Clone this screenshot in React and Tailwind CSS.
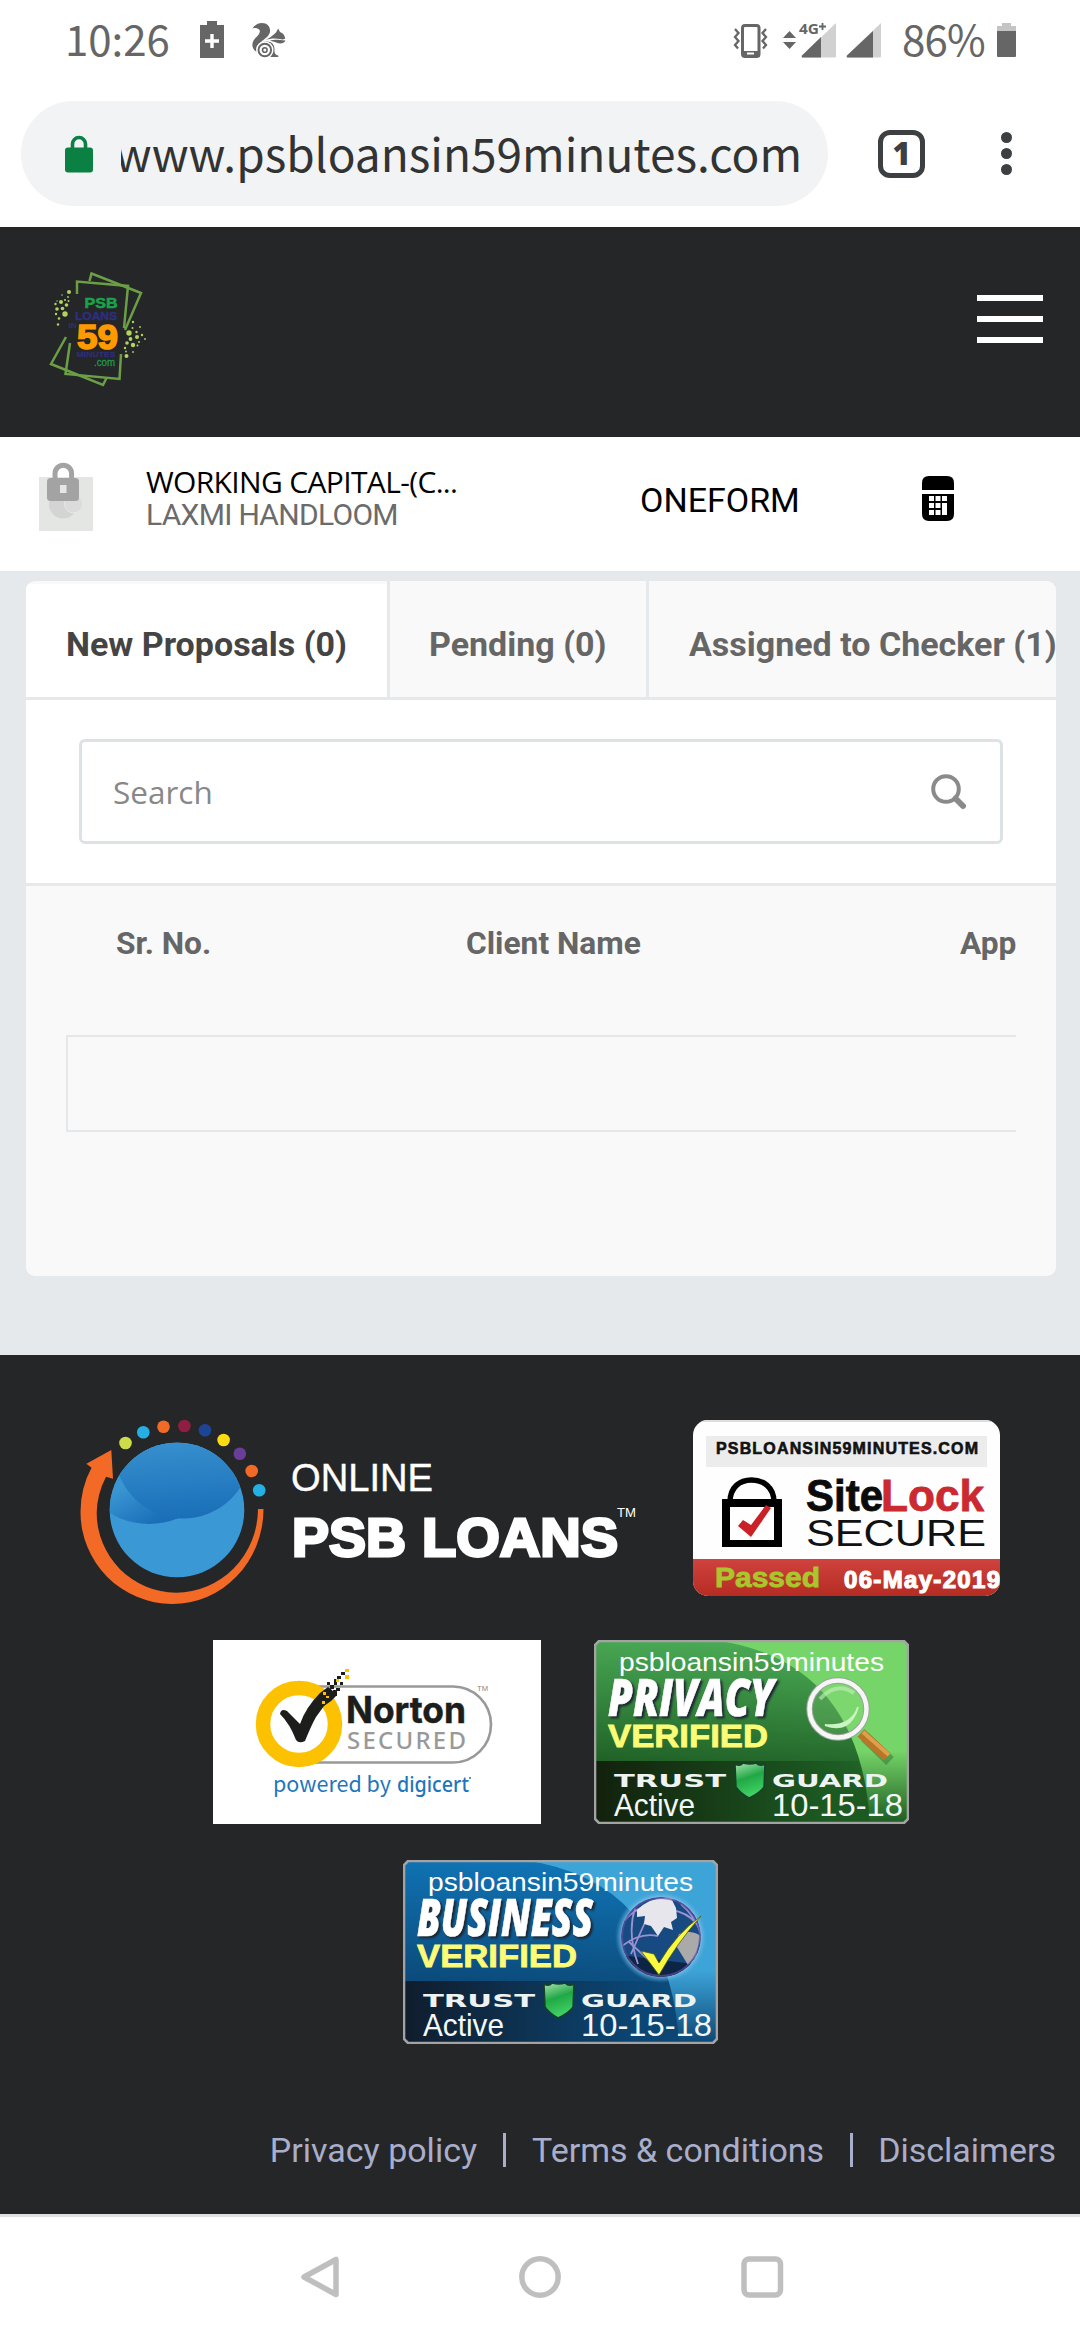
import React from "react";

const INK = "#666666";

function ChargingBattery() {
  return (
    <svg className="ml-[29px] mt-[-1px] h-[37px] w-[24px]" viewBox="0 0 24 37" fill={INK}>
      <path d="M7 0h10v4h7v33H0V4h7z" />
      <path d="M12 13v14M5 20h14" stroke="#fff" strokeWidth="3.400" />
    </svg>
  );
}

function Squirrel() {
  return (
    <svg className="ml-[28px] h-[35px] w-[34px]" viewBox="0 0 34 35">
      <path d="M0.500 5.500C3 1.500 6.500 0 10 0c5.500 0 8.500 4 8 8.500-.5 4-4 6.500-8 9.500-4 3-6 6-5 11C-1 26-1 19 4 14.500 8 11 9 7.500 6.500 6 4.500 4.800 2.500 5 0.500 5.500z" fill={INK} />
      <path d="M12 17.500c5-1.500 8-4.500 12-8l2.200-4 1.800 3.500c3 1 4.500 3 5.300 6.500-2 1.200-3.500 1-5.500.6C23 15 18 15.500 12 17.500z" fill={INK} />
      <path d="M18 17.500c5-1.500 9-.5 15.500 0-1 3-5.500 3.500-8 2.500-2-1-5-1.500-7.500-2.500z" fill={INK} />
      <path d="M10 19c8-2 13 1 12.500 8-.2 2.500.5 5 3.800 5.500V34H12z" fill={INK} />
      <circle cx="12.800" cy="27" r="8" fill={INK} stroke="#fff" strokeWidth="1.500" />
      <circle cx="12.800" cy="27" r="4.200" fill={INK} stroke="#fff" strokeWidth="2.200" />
      <circle cx="12.800" cy="27" r="1.500" fill="#fff" />
    </svg>
  );
}

function StatusIcons() {
  return (
    <svg className="h-[38px] w-[150px]" viewBox="731 21 150 38">
      <rect x="741.500" y="25.500" width="16.500" height="31" rx="2.500" fill="none" stroke={INK} strokeWidth="3" />
      <rect x="741" y="51" width="18" height="6" fill={INK} />
      <rect x="746" y="52.500" width="7" height="2" fill="#fff" />
      <path d="M734 29l3.500 4-3.500 4 3.500 4-3.500 4 3 3.500M765 29l-3.500 4 3.500 4-3.500 4 3.500 4-3 3.500" fill="none" stroke={INK} strokeWidth="2.300" />
      <path d="M782 38l6.500-7 6.500 7zM782 42l6.500 7 6.500-7z" fill={INK} />
      <path d="M835 23v33.500q0 1-1 1h-32q-2 0-1-2z" fill="#d1d1d1" />
      <path d="M820 37v20.500h-18q-2 0-1-2z" fill={INK} />
      <text x="798" y="34" fontSize="15" fontWeight="700" fontFamily="Noto Sans, sans-serif" fill={INK} stroke="#fff" strokeWidth="2.500" paintOrder="stroke" textLength="20" lengthAdjust="spacingAndGlyphs">4G</text>
      <path d="M821.500 23v7M818 26.500h7" stroke={INK} strokeWidth="1.800" />
      <path d="M880 23v33.500q0 1-1 1h-32q-2 0-1-2z" fill="#d1d1d1" />
      <path d="M872 31v26.500h-25q-2 0-1-2z" fill={INK} />
    </svg>
  );
}

function BrowserChrome() {
  return (
    <div className="h-[227px] bg-white">
      <div className="flex h-[80px] items-center pl-[65px] pr-[64px] text-[#666666]">
        <span className="-mt-[4px] w-[106px] whitespace-nowrap font-['Noto_Sans_CJK_SC',sans-serif] text-[42px] leading-[74px]">10:26</span>
        <ChargingBattery />
        <Squirrel />
        <div className="ml-auto flex items-center">
          <StatusIcons />
          <span className="-mt-[4px] ml-[20px] w-[84px] whitespace-nowrap font-['Noto_Sans_CJK_SC',sans-serif] text-[42px] leading-[74px] tracking-[-0.8px]">86%</span>
          <svg className="ml-[11px] h-[34px] w-[19px]" viewBox="0 0 19 34">
            <path d="M5 0h9v3h5v8H0V3h5z" fill="#c4c4c4" />
            <path d="M0 8h19v25q0 1-1 1H1q-1 0-1-1z" fill={INK} />
          </svg>
        </div>
      </div>
      <div className="flex items-center pt-[21px] pl-[21px]">
        <div className="flex h-[105px] w-[807px] items-center rounded-full bg-[#f1f3f4] pl-[44px]">
          <svg className="h-[38px] w-[28px]" viewBox="0 0 28 38">
            <path d="M7.500 14V9a6.500 6.500 0 0 1 13 0v5" fill="none" stroke="#0b8043" strokeWidth="3.600" />
            <rect y="12.500" width="28" height="25" rx="3" fill="#0b8043" />
          </svg>
          <div className="-mt-[3px] ml-[28px] flex w-[681px] justify-end overflow-hidden">
            <span className="whitespace-nowrap font-['Noto_Sans_CJK_SC',sans-serif] text-[46px] leading-[74px] text-[#333333]">www.psbloansin59minutes.com</span>
          </div>
        </div>
        <div className="ml-[50px] flex h-[48px] w-[47px] items-center justify-center rounded-[12px] border-[5px] border-[#3c4043] font-['Noto_Sans',sans-serif] text-[31px] font-black leading-none text-[#3c4043]">1</div>
        <div className="ml-[76px] flex flex-col gap-[5px]">
          <i className="size-[11px] rounded-full bg-[#3c4043]" />
          <i className="size-[11px] rounded-full bg-[#3c4043]" />
          <i className="size-[11px] rounded-full bg-[#3c4043]" />
        </div>
      </div>
    </div>
  );
}

const SPECKS = [
  [20, 22, 2], [12, 32, 2], [17.500, 35, 1.800], [8, 39, 1.800], [13.500, 38.500, 1.800], [16, 44, 2.700], [6.500, 34, 1.200], [7, 44, 1.200],
  [10, 48.500, 1.300], [9, 54.500, 1.200], [16, 30, 1], [19.500, 31, 1], [13, 25, 0.800], [19, 27, 0.900], [8, 31, 0.700],
  [80, 63, 2.700], [84, 52, 1.200], [83.500, 58, 1], [87.500, 62, 1.200], [91, 57, 0.900], [93, 65, 1.200], [88, 67, 2], [81.500, 69, 1.900],
  [78, 73, 1.800], [84, 75, 2.200], [76, 78, 1.200], [88.500, 75.500, 1], [77.500, 86, 2], [84, 82, 0.900], [96, 69, 0.900], [90, 72, 1], [77, 81.500, 0.900],
];

function BrandMark() {
  return (
    <svg className="h-[118px] w-[100px]" viewBox="0 0 100 118" fontFamily="Liberation Sans, Arial, sans-serif" fontWeight="700">
      <g fill="none" stroke="#6b9f45" strokeWidth="2.500">
        <path d="M28 24V11.500L79 16 75 58" />
        <path d="M40.500 11L42.500 3.500 92 23 76 60" />
        <path d="M21 73L16.500 104 70.500 109 72 84" />
        <path d="M17 67L2 94 54 115 57.500 108" />
      </g>
      <g fill="#b2d35c">
        {SPECKS.map(([x, y, r], i) => <circle key={i} cx={x} cy={y} r={r} />)}
      </g>
      <text x="35.500" y="38" fontSize="15.500" fill="#1aa34a" stroke="#1aa34a" strokeWidth="0.600" textLength="33" lengthAdjust="spacingAndGlyphs">PSB</text>
      <text x="26" y="49.500" fontSize="11.500" fill="#2d2f7f" stroke="#2d2f7f" strokeWidth="0.400" textLength="42" lengthAdjust="spacingAndGlyphs">LOANS</text>
      <text x="19.500" y="58" fontSize="7" fill="#2d2f7f" textLength="8" lengthAdjust="spacingAndGlyphs">IN</text>
      <text x="28" y="79" fontSize="35" fill="#ff9900" stroke="#ff9900" strokeWidth="1.600" textLength="41" lengthAdjust="spacingAndGlyphs">59</text>
      <text x="27.500" y="87" fontSize="7.500" fill="#2d2f7f" textLength="39" lengthAdjust="spacingAndGlyphs">MINUTES</text>
      <text x="45" y="95.500" fontSize="10.500" fontWeight="400" fill="#1f9a49" stroke="#1f9a49" strokeWidth="0.300" textLength="21" lengthAdjust="spacingAndGlyphs">.com</text>
    </svg>
  );
}

function SiteHeader() {
  return (
    <header className="flex h-[210px] items-start justify-between bg-[#252628] pl-[49px] pr-[37px]">
      <div className="pt-[43px]"><BrandMark /></div>
      <button className="mt-[68px] flex w-[66px] flex-col gap-[15px]" aria-label="Menu">
        <i className="h-[6px] bg-white" />
        <i className="h-[6px] bg-white" />
        <i className="h-[6px] bg-white" />
      </button>
    </header>
  );
}

function AccountBar() {
  return (
    <section className="flex h-[134px] items-start bg-white font-['Roboto',sans-serif]">
      <svg className="ml-[39px] mt-[24px] h-[70px] w-[54px]" viewBox="0 0 54 70">
        <path d="M0 16h54v54H0z" fill="#e4e6e4" />
        <circle cx="24" cy="43.500" r="14" fill="#d3d4d3" />
        <circle cx="34.500" cy="43" r="9" fill="#dadbda" stroke="#e6e8e6" />
        <path d="M16 19V12.500a8.300 8.300 0 0 1 16.600 0V19" fill="none" stroke="#a3a3a3" strokeWidth="5" />
        <rect x="8" y="17" width="32" height="23" rx="3.500" fill="#a3a3a3" />
        <path d="M21 24h6.500v8H21z" fill="#e6e6e6" />
      </svg>
      <div className="ml-[53px] w-[494px] pt-[29px] whitespace-nowrap">
        <div className="font-['Open_Sans',sans-serif] text-[30px] leading-[32px] tracking-[-0.65px] text-black">WORKING CAPITAL-(C...</div>
        <div className="pt-px text-[30px] leading-[32px] tracking-[-0.7px] text-[#6b6b6b]">LAXMI HANDLOOM</div>
      </div>
      <div className="w-[282px] pt-[43px] text-[34px] leading-[40px] text-black">ONEFORM</div>
      <svg className="mt-[39px] h-[45px] w-[32px]" viewBox="0 0 32 45">
        <path d="M0 14V7q0-7 7-7h18q7 0 7 7v7zM0 18h32v20q0 7-7 7H7q-7 0-7-7z" />
        <g fill="#fff">
          <path d="M7 20h5v5H7zM13.500 20h5v5h-5zM20 20h5v5h-5zM7 27h5v5H7zM13.500 27h5v5h-5zM20 27h5v12h-5zM7 34h5v5H7zM13.500 34h5v5h-5z" />
        </g>
      </svg>
    </section>
  );
}

function Proposals() {
  return (
    <main className="h-[784px] bg-[#e5e9ec] px-[26px] pr-[24px] pt-[10px] font-['Roboto',sans-serif]">
      <div className="h-[695px] overflow-hidden rounded-[9px] bg-[#f9f9f9]">
        <nav className="flex h-[119px] border-b-[3px] border-[#e5e9ec] text-[34px] font-bold whitespace-nowrap text-[#666666]">
          <div className="w-[364px] shrink-0 border-r-[3px] border-[#e5e9ec] pt-[3px]">
            <div className="h-full bg-white pl-[40px] pt-[41px] leading-[38px] text-[#444444]">New Proposals (0)</div>
          </div>
          <div className="w-[259px] shrink-0 border-r-[3px] border-[#e5e9ec] pl-[39px] pt-[44px] leading-[38px]">Pending (0)</div>
          <div className="shrink-0 pl-[40px] pt-[44px] leading-[38px]">Assigned to Checker (1)</div>
        </nav>
        <div className="h-[186px] border-b-[3px] border-[#e5e9ec] bg-white px-[53px] pt-[39px]">
          <div className="flex h-[105px] items-center justify-between rounded-[6px] border-[3px] border-[#dde3e5] pl-[31px] pr-[33px]">
            <span className="font-['Open_Sans',sans-serif] text-[31.5px] leading-[44px] text-[#888888]">Search</span>
            <svg className="h-[36px] w-[36px]" viewBox="0 0 36 36" fill="none" stroke="#8a8a8a">
              <circle cx="15" cy="15" r="12.800" strokeWidth="4" />
              <path d="M24.500 24.500L32 32" strokeWidth="6" strokeLinecap="round" />
            </svg>
          </div>
        </div>
        <div className="mx-[40px] overflow-hidden">
          <div className="flex h-[149px] pt-[39px] text-[31.7px] font-bold leading-[38px] whitespace-nowrap text-[#666666]">
            <div className="w-[350px] shrink-0 pl-[50px]">Sr. No.</div>
            <div className="w-[494px] shrink-0 pl-[50px]">Client Name</div>
            <div className="shrink-0 pl-[50px]">App</div>
          </div>
          <div className="h-[97px] border-y-2 border-l-2 border-[#e5e8ea]" />
        </div>
      </div>
    </main>
  );
}

function OnlinePsbLogo() {
  return (
    <svg className="h-[188px] w-[560px]" viewBox="79 1418 560 188" fontFamily="Liberation Sans, Arial, sans-serif">
      <defs>
        <linearGradient id="orbTop" x1="0.450" y1="0.300" x2="0.500" y2="1">
          <stop offset="0" stopColor="#3d97d3" />
          <stop offset="1" stopColor="#1a6fb8" />
        </linearGradient>
        <linearGradient id="orbSide" gradientUnits="userSpaceOnUse" x1="125" y1="1485" x2="148" y2="1526">
          <stop offset="0" stopColor="#3a96d3" />
          <stop offset="1" stopColor="#1a6fb8" />
        </linearGradient>
        <clipPath id="orb"><circle cx="177" cy="1510" r="67.300" /></clipPath>
      </defs>
      <g clipPath="url(#orb)">
        <circle cx="177" cy="1510" r="68" fill="#3a98d4" />
        <circle cx="149" cy="1448" r="76" fill="url(#orbSide)" />
        <circle cx="183" cy="1450" r="68.500" fill="url(#orbTop)" />
      </g>
      <path d="M263.500 1509A91 95 0 0 1 172 1604A92 92 0 0 1 80.500 1512Q80.500 1488 91.500 1467.700L86.400 1463.700 111.300 1450 113 1478.700 106 1476.700Q96.700 1495 96.700 1513A80 80 0 0 0 176 1592.700A82 84 0 0 0 258 1509Z" fill="#f26a25" />
      <g>
        <circle cx="125.500" cy="1443" r="6.300" fill="#cddc49" />
        <circle cx="143.300" cy="1432.300" r="6.300" fill="#24b0e6" />
        <circle cx="163.500" cy="1426.700" r="6.300" fill="#f26a25" />
        <circle cx="184.400" cy="1426" r="6.300" fill="#8e1f42" />
        <circle cx="205" cy="1430.300" r="6.300" fill="#1d4596" />
        <circle cx="223.600" cy="1440" r="6.300" fill="#fddb12" />
        <circle cx="239.800" cy="1453.700" r="6.300" fill="#6a3d98" />
        <circle cx="251.700" cy="1471" r="6.300" fill="#f26a25" />
        <circle cx="259.200" cy="1490.300" r="6.300" fill="#24b0e6" />
      </g>
      <text x="291" y="1491" fontSize="38" fill="#fff" stroke="#fff" strokeWidth="0.400" textLength="142" lengthAdjust="spacingAndGlyphs">ONLINE</text>
      <g fontSize="53" fontWeight="700" fill="#fff" stroke="#fff" strokeWidth="2.800">
        <text x="292" y="1556" textLength="114" lengthAdjust="spacingAndGlyphs">PSB</text>
        <text x="422" y="1556" textLength="196" lengthAdjust="spacingAndGlyphs">LOANS</text>
      </g>
      <text x="617" y="1517" fontSize="13" fill="#fff" textLength="19" lengthAdjust="spacingAndGlyphs">TM</text>
    </svg>
  );
}

function SiteLockBadge() {
  return (
    <svg className="mt-[2px] h-[176px] w-[307px]" viewBox="693 1420 307 176" fontFamily="Liberation Sans, Arial, sans-serif" fontWeight="700">
      <defs>
        <linearGradient id="passStrip" x1="0" y1="0" x2="0" y2="1">
          <stop offset="0" stopColor="#d0423e" />
          <stop offset="1" stopColor="#b52c22" />
        </linearGradient>
        <clipPath id="lockCard"><rect x="693" y="1420" width="307" height="176" rx="15" /></clipPath>
      </defs>
      <g clipPath="url(#lockCard)">
        <path d="M693 1420h307v176H693z" fill="#fefefe" />
        <path d="M693 1420h307v2H693z" fill="#dedede" />
        <path d="M706 1436h281v31H706z" fill="#ececec" />
        <path d="M693 1559h307v37H693z" fill="url(#passStrip)" />
      </g>
      <text x="716" y="1454" fontSize="16" fill="#111" stroke="#111" strokeWidth="0.600" textLength="262" lengthAdjust="spacing">PSBLOANSIN59MINUTES.COM</text>
      <path d="M730 1502C730 1487 740 1480 751.500 1480S774 1487 774 1502" fill="none" stroke="#000" strokeWidth="5.500" />
      <path d="M722 1499h60v48h-60zM730 1507v33h44v-33z" fillRule="evenodd" />
      <path d="M738 1526l5-6 8 5 15-20 5 3-20 29z" fill="#cb2026" />
      <text x="806" y="1511" fontSize="44" fill="#0b0b0b" stroke="#0b0b0b" strokeWidth="0.800" textLength="77" lengthAdjust="spacingAndGlyphs">Site</text>
      <text x="881" y="1511" fontSize="44" fill="#cb2a30" stroke="#cb2a30" strokeWidth="0.800" textLength="103" lengthAdjust="spacingAndGlyphs">Lock</text>
      <text x="806" y="1546" fontSize="37" fontWeight="400" fill="#111" textLength="180" lengthAdjust="spacingAndGlyphs">SECURE</text>
      <text x="715" y="1587" fontSize="28" fill="#a9c72c" stroke="#a9c72c" strokeWidth="0.800" textLength="105" lengthAdjust="spacingAndGlyphs">Passed</text>
      <text x="844" y="1588" fontSize="24" fill="#fff" stroke="#fff" strokeWidth="1.200" textLength="156" lengthAdjust="spacing">06-May-2019</text>
    </svg>
  );
}

function NortonBadge() {
  return (
    <svg className="h-[184px] w-[328px]" viewBox="213 1640 328 184">
      <path d="M213 1640h328v184H213z" fill="#fff" />
      <path d="M310 1686.500H453a38 38 0 0 1 0 76H310" fill="none" stroke="#999" strokeWidth="2.600" />
      <circle cx="299" cy="1724" r="36" fill="#fff" stroke="#fcc100" strokeWidth="14.500" />
      <path d="M280 1714q1-6 7-3l13 13q6-17 20-31l4-3 4-3 4 3 4 6-5 5-7 5-8 11q-5 9-11 24-6 3-9-1-6-16-16-26z" fill="#1d1d1b" />
      <path d="M327 1682h3v3h-3zM330 1685h4v4h-4zM334 1679h3v6h-3zM337 1676h4v3h-4zM341 1672h4v3h-4zM340 1682h3v3h-3zM336 1688h4v3h-4zM333 1690h4v6h-4z" fill="#1d1d1b" />
      <path d="M323 1692h3v3h-3zM322 1701h3v3h-3zM326 1696h3v2h-3zM336 1679h3v3h-3zM345 1669h4v3h-4zM345 1675h4v4h-4z" fill="#fcc100" />
      <text x="346" y="1723" fontFamily="Inter, sans-serif" fontSize="37" fontWeight="700" fill="#1d1d1b" stroke="#1d1d1b" strokeWidth="0.500" textLength="120" lengthAdjust="spacingAndGlyphs">Norton</text>
      <text x="347" y="1749" fontFamily="Noto Sans, sans-serif" fontSize="24" fontWeight="500" fill="#999" textLength="119" lengthAdjust="spacing">SECURED</text>
      <text x="273" y="1792" fontFamily="Noto Sans CJK SC, sans-serif" fontSize="21" fill="#1f76bc" textLength="118" lengthAdjust="spacingAndGlyphs">powered by</text>
      <text x="397" y="1792" fontFamily="Noto Sans, sans-serif" fontSize="21" fontWeight="500" fill="#1f76bc" textLength="72" lengthAdjust="spacingAndGlyphs">digicert</text>
      <circle cx="470" cy="1778" r="1" fill="#1f76bc" />
      <text x="477" y="1691" fontFamily="Liberation Sans, Arial, sans-serif" fontSize="8" fill="#888" textLength="11" lengthAdjust="spacingAndGlyphs">TM</text>
    </svg>
  );
}

function Magnifier() {
  return (
    <g>
      <path d="M268 93l25 24" stroke="#1d5c27" strokeOpacity="0.400" strokeWidth="11" transform="translate(3 4)" />
      <path d="M267 93l26 24" stroke="#b7762a" strokeWidth="10" />
      <path d="M269 92l26 23" stroke="#e0a04b" strokeWidth="4" />
      <circle cx="244" cy="69" r="28.500" fill="#8fe07f" fillOpacity="0.250" stroke="#9aa39a" strokeWidth="6.500" />
      <circle cx="244" cy="69" r="28.500" fill="none" stroke="#f6f6f6" strokeWidth="4.500" />
      <path d="M226 59q16-18 34-6" fill="none" stroke="#c5f0bd" strokeOpacity="0.600" strokeWidth="4" />
      <path d="M231 85q25 9 33-18-6 20-33 18z" fill="#d8f8d0" stroke="#c9f3c0" strokeWidth="2" />
    </g>
  );
}

function Globe() {
  return (
    <g>
      <defs>
        <radialGradient id="halo"><stop offset="0.800" stopColor="#b8dcf2" /><stop offset="1" stopColor="#4aa5d8" stopOpacity="0" /></radialGradient>
        <clipPath id="globeClip"><circle cx="258" cy="77" r="40" /></clipPath>
      </defs>
      <circle cx="258" cy="77" r="46" fill="url(#halo)" />
      <g clipPath="url(#globeClip)">
        <circle cx="258" cy="77" r="40" fill="#174a80" />
        <path d="M218 118V95l40 5 40 5v13z" fill="#0d2444" />
        <g fill="none" stroke="#9a90d2" strokeWidth="1.800">
          <path d="M222 60q16-20 66-22M219 86q18-14 36-10M232 48q-8 26 3 56M228 94l15-34M250 104l-24-22M278 44q14 12 20 30M268 50q16 2 26 14" />
        </g>
        <path d="M234 50q14-14 34-12l5 10 1 10-6 4 2 8-9-3-6 9-7-10-7-2 1-8-8 1z" fill="#e6e6ec" />
        <path d="M276 74q12-5 22 2l-5 20-8 9-8-13-5-8z" fill="#a9aaa9" />
        <circle cx="258" cy="77" r="39" fill="none" stroke="#5e4ba5" strokeWidth="2" strokeOpacity="0.700" />
      </g>
      <path d="M238 91l13 3 5 9q17-29 42-47-24 27-42 59z" fill="#fbf93f" stroke="#4a5920" strokeWidth="0.800" />
    </g>
  );
}

function TrustBadge({ id, title, titleEnd, light, mid, dark, night, children }) {
  return (
    <svg className="h-[184px] w-[315px]" viewBox="0 0 315 184" fontFamily="Liberation Sans, Arial, sans-serif">
      <defs>
        <linearGradient id={id + "Base"} x1="0.300" y1="0" x2="0.200" y2="1">
          <stop offset="0" stopColor={mid} />
          <stop offset="0.750" stopColor={dark} />
        </linearGradient>
        <linearGradient id={id + "Edge"} x1="0" y1="0" x2="0" y2="1">
          <stop offset="0" stopColor={light} />
          <stop offset="0.600" stopColor={light} />
          <stop offset="1" stopColor={dark} />
        </linearGradient>
        <linearGradient id={id + "Band"} x1="0" y1="0" x2="1" y2="0">
          <stop offset="0" stopColor={night} />
          <stop offset="0.850" stopColor={dark} />
          <stop offset="1" stopColor={dark} stopOpacity="0.200" />
        </linearGradient>
        <linearGradient id={id + "Shield"} x1="0" y1="0" x2="0.300" y2="1">
          <stop offset="0" stopColor="#a9e3b0" />
          <stop offset="0.500" stopColor="#20a845" />
          <stop offset="1" stopColor="#41d265" />
        </linearGradient>
        <clipPath id={id + "Clip"}><path d="M5 0h305l5 5v174l-5 5H5l-5-5V5z" /></clipPath>
      </defs>
      <g clipPath={"url(#" + id + "Clip)"}>
        <path d="M0 0h315v184H0z" fill={"url(#" + id + "Base)"} />
        <path d="M120 0Q266 20 276 184H315V0z" fill={"url(#" + id + "Edge)"} />
        <path d="M0 121H265Q275 150 276 184H0z" fill={"url(#" + id + "Band)"} />
      </g>
      <path d="M5 1h305l4 4v174l-4 4H5l-4-4V5z" fill="none" stroke="#a3a3a3" strokeWidth="2.600" />
      {children}
      <text x="25" y="31" fontSize="26" fill="#fff" textLength="265" lengthAdjust="spacingAndGlyphs">psbloansin59minutes</text>
      <text x="14" y="76" className="drop-shadow-[2px_2px_1px_#1b2430]" fontFamily="Open Sans, sans-serif" fontSize="52" fontWeight="800" fontStyle="italic" fill="#fff" stroke="#fff" strokeWidth="0.600" textLength={titleEnd - 14} lengthAdjust="spacingAndGlyphs">{title}</text>
      <text x="14" y="107" fontSize="32" fontWeight="700" fill="#fbfb78" stroke="#fbfb78" strokeWidth="0.800" textLength="160" lengthAdjust="spacingAndGlyphs">VERIFIED</text>
      <g fontFamily="DejaVu Sans, sans-serif" fontSize="18" fontWeight="700" fill="#edf3f2">
        <text x="20" y="147" textLength="112" lengthAdjust="spacingAndGlyphs">TRUST</text>
        <text x="178" y="147" textLength="116" lengthAdjust="spacingAndGlyphs">GUARD</text>
      </g>
      <path d="M141 124q5 3 8-1 7 2 13 0 4 4 9 1l-1 23q-4 6-15 11-9-5-13-11z" fill={"url(#" + id + "Shield)"} stroke="#17402c" strokeWidth="1.500" />
      <text x="20" y="176" fontSize="32" fill="#f4f7f7" textLength="81" lengthAdjust="spacingAndGlyphs">Active</text>
      <text x="178" y="176" fontSize="32" fill="#f4f7f7" textLength="131" lengthAdjust="spacingAndGlyphs">10-15-18</text>
    </svg>
  );
}

function Footer() {
  return (
    <footer className="h-[859px] bg-[#252628] pt-[63px]">
      <div className="flex h-[222px] items-start gap-[54px] pl-[79px]">
        <OnlinePsbLogo />
        <SiteLockBadge />
      </div>
      <div className="flex h-[220px] items-start gap-[53px] pl-[213px]">
        <NortonBadge />
        <TrustBadge id="privacy" title="PRIVACY" titleEnd={180} light="#76d568" mid="#4aaa55" dark="#1c5a22" night="#12200c">
          <Magnifier />
        </TrustBadge>
      </div>
      <div className="flex h-[270px] items-start pl-[403px]">
        <TrustBadge id="business" title="BUSINESS" titleEnd={190} light="#3da4d8" mid="#1074b5" dark="#0b4674" night="#101c2c">
          <Globe />
        </TrustBadge>
      </div>
      <div className="flex items-center justify-end pr-[24px] font-['Roboto',sans-serif] text-[34px] leading-[40px] whitespace-nowrap text-[#a9aecb]">
        <span>Privacy policy</span>
        <i className="mx-[26px] h-[34px] w-[3px] bg-[#a9aecb]" />
        <span>Terms &amp; conditions</span>
        <i className="ml-[26px] mr-[25px] h-[34px] w-[3px] bg-[#a9aecb]" />
        <span>Disclaimers</span>
      </div>
    </footer>
  );
}

function SystemNav() {
  return (
    <div className="flex h-[126px] items-start border-t-[3px] border-[#e0e0e0] bg-white pl-[299px] pt-[39px]">
      <svg className="h-[42px] w-[485px]" viewBox="299 2256 485 42" fill="none" stroke="#bfbfbf" strokeWidth="5.500" strokeLinejoin="round">
        <path d="M336 2259.500v35L304 2277z" />
        <circle cx="540" cy="2277" r="18.200" />
        <rect x="744" y="2259" width="36.500" height="36" rx="5" />
      </svg>
    </div>
  );
}

export default function App() {
  return (
    <div className="h-[2340px] w-[1080px] overflow-hidden bg-white">
      <BrowserChrome />
      <SiteHeader />
      <AccountBar />
      <Proposals />
      <Footer />
      <SystemNav />
    </div>
  );
}
